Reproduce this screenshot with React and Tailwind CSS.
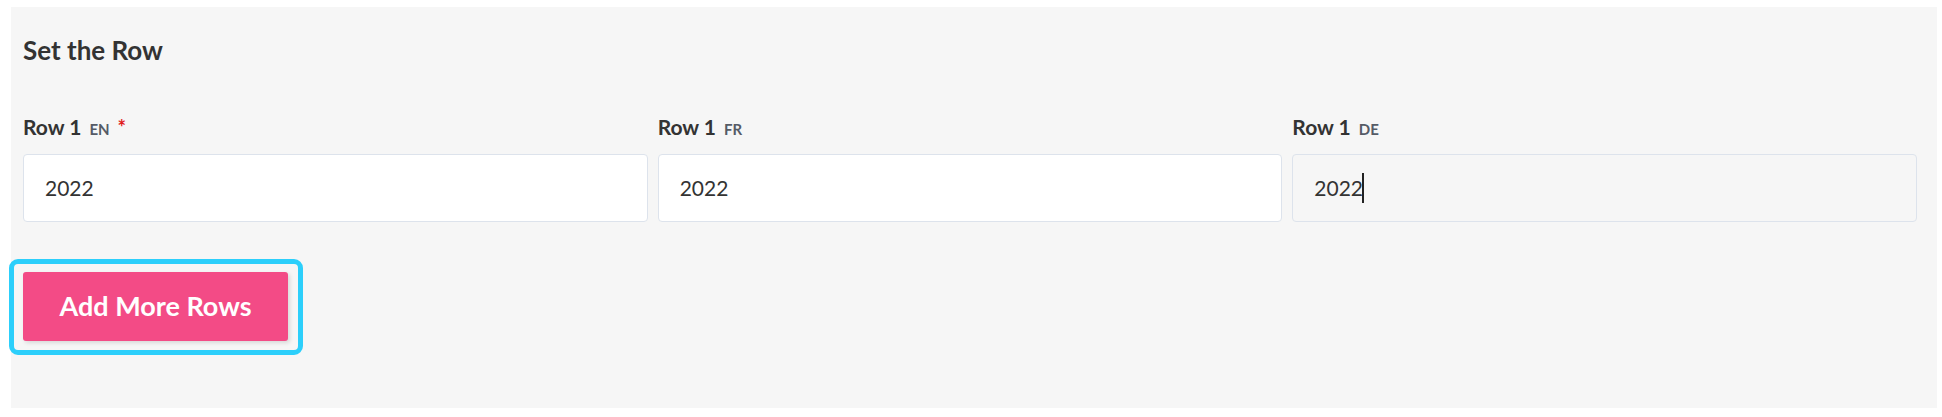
import React from 'react';

const fields = [
  { lang: 'EN', required: true, value: '2022', bg: 'bg-white' },
  { lang: 'FR', required: false, value: '2022', bg: 'bg-white' },
  { lang: 'DE', required: false, value: '2022', bg: 'bg-[#f6f6f6]', focused: true },
];

export default function App() {
  return (
    <div className="w-[1942px] h-[417px] bg-white pt-[7px] pl-[11px] pr-[5px]" style={{ fontFamily: 'Lato, "Open Sans", sans-serif' }}>
      <div className="bg-[#f6f6f6] pt-[28px] pl-[12px] pr-[20px] pb-[53px]">
        <h2 className="text-[26px] leading-[30px] font-bold text-[#333333]">Set the Row</h2>

        <div className="grid grid-cols-3 gap-x-[10px] mt-[49px]">
          {fields.map(f => (
            <div key={f.lang}>
              <label className="block text-[21px] leading-[26px] font-bold text-[#333333] mb-[14px]">
                Row 1
                <span className="ml-[8px] text-[15px] leading-none font-bold text-[#555b66]">{f.lang}</span>
                {f.required && <span className="ml-[8px] text-[20px] leading-none text-[#e01b1b]">*</span>}
              </label>
              <div className={`h-[68px] border border-[#dde3ec] rounded-[4px] flex items-center px-[21px] ${f.bg}`}>
                <span className="text-[21px] text-[#333333]">{f.value}</span>
                {f.focused && <span className="w-[2px] h-[30px] bg-[#222222] ml-[-1px]"></span>}
              </div>
            </div>
          ))}
        </div>

        <div className="mt-[37px] -ml-[14px] w-fit border-[5px] border-[#2ccffb] rounded-[9px] pt-[8px] pb-[9px] pl-[9px] pr-[10px]">
          <button className="w-[265px] h-[69px] bg-[#f34b86] rounded-[3px] text-white text-[27px] font-bold shadow-[2px_2px_4px_rgba(0,0,0,0.12)]">
            Add More Rows
          </button>
        </div>
      </div>
    </div>
  );
}
